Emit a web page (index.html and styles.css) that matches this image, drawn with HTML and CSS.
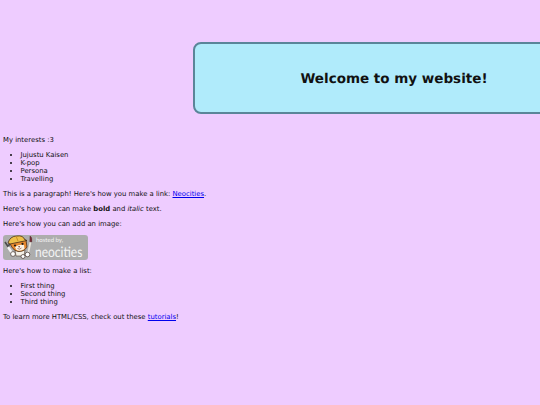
FILE: index.html
```html
<!DOCTYPE html>
<html lang="en">
<head>
    <meta charset="UTF-8">
    <title>My website</title>
    <link rel="stylesheet" href="styles.css">
</head>
<body>
<div class="banner">
    <h1>Welcome to my website!</h1>
</div>
<div class="content">
    <p>My interests :3</p>
    <ul>
        <li>Jujustu Kaisen</li>
        <li>K-pop</li>
        <li>Persona</li>
        <li>Travelling</li>
    </ul>
    <p>This is a paragraph! Here's how you make a link: <a href="#">Neocities</a>.</p>
    <p>Here's how you can make <strong>bold</strong> and <em>italic</em> text.</p>
    <p>Here's how you can add an image:</p>
    <div class="badge">
        <svg class="badge-cat" width="32" height="25" viewBox="0 0 32 25">
            <!-- wrench and left arm -->
            <path d="M2 7 L6 13 M7 7 L5 13" stroke="#4a4a4a" stroke-width="1.6" fill="none"/>
            <path d="M5 12 L9 18" stroke="#f4f4f4" stroke-width="2.4"/>
            <circle cx="10" cy="19" r="2.4" fill="#fff" stroke="#4a3a30" stroke-width="0.7"/>
            <!-- body -->
            <path d="M12 15 L22 15 L21 21 L13 21 Z" fill="#f5f0e6" stroke="#4a3a30" stroke-width="0.6"/>
            <circle cx="20" cy="21.5" r="2" fill="#fff" stroke="#4a3a30" stroke-width="0.7"/>
            <!-- head -->
            <path d="M7 8 L23 5 L24 12 Q21 17 15 16.500 Q9 15 7 8 Z" fill="#e88a2e" stroke="#4a2e18" stroke-width="0.8"/>
            <path d="M12 12 Q16 9 21 10 L21.500 14 Q17 17 13.500 15 Z" fill="#fbf3e4"/>
            <circle cx="12" cy="10.500" r="1.100" fill="#1f1a18"/>
            <circle cx="19.500" cy="8.800" r="1.100" fill="#1f1a18"/>
            <path d="M15 11.500 L17 11 L16.300 12.800 Z" fill="#5a2a20"/>
            <path d="M14.500 13.500 Q16.500 15 18.500 13" fill="none" stroke="#7a3020" stroke-width="0.6"/>
            <!-- hard hat -->
            <path d="M5 8 Q7 1 14 1 Q20 0 22 5 L24 5.500 L7 9 Z" fill="#eec04a" stroke="#4a2e18" stroke-width="0.8"/>
            <path d="M13 1 L15 6" stroke="#c98f26" stroke-width="1"/>
            <!-- paintbrush -->
            <path d="M27.500 7 L25 19" stroke="#e8e4da" stroke-width="1.800"/>
            <path d="M27 1 Q29.500 2 28.800 7 L26.800 6.800 Z" fill="#7a2a34" stroke="#4a2e30" stroke-width="0.4"/>
            <circle cx="24.500" cy="19.500" r="2.300" fill="#fff" stroke="#4a3a30" stroke-width="0.7"/>
        </svg>
        <div class="badge-text">
            <span class="badge-small">hosted by,</span>
            <span class="badge-big">neocities</span>
        </div>
    </div>
    <p>Here's how to make a list:</p>
    <ul>
        <li>First thing</li>
        <li>Second thing</li>
        <li>Third thing</li>
    </ul>
    <p>To learn more HTML/CSS, check out these <a href="#">tutorials</a>!</p>
</div>
</body>
</html>
```

FILE: styles.css
```css
html,body{
    margin: 0;
    padding: 0;
    height: 100%;
    overflow: hidden;
    background-color: #eeccff;
    font-family: "DejaVu Sans",Verdana,sans-serif;
    font-size: 6.85px;
    line-height: 8px;
    color: #111;
    text-rendering: geometricPrecision;
}
.banner{
    display: flex;
    align-items: center;
    justify-content: center;
    box-sizing: border-box;
    width: 402px;
    height: 72px;
    margin-top: 42px;
    margin-left: 193px;
    padding-top: 2px;
    background-color: #b0ebfb;
    border: 2px solid #5a8599;
    border-radius: 8px;
}
.banner h1{
    margin: 0;
    font-size: 13.5px;
    line-height: 18px;
}
.content{
    padding: 0 3px;
    margin-top: 22px;
}
p{
    margin: 7px 0;
}
ul{
    margin: 7px 0;
    padding-left: 17.5px;
}
a{
    color: #0000ee;
}
.badge{
    display: flex;
    align-items: center;
    width: 85px;
    height: 25px;
    background-color: #adadad;
    border-radius: 3px;
}
.badge-cat{
    flex: none;
}
.badge-text{
    display: flex;
    flex-direction: column;
    color: #f4f4f4;
    font-family: "Lato",sans-serif;
}
.badge-small{
    margin-left: 1px;
    font-size: 6px;
    line-height: 8px;
}
.badge-big{
    font-size: 12px;
    line-height: 13px;
    transform: scaleY(1.2);
}
```
